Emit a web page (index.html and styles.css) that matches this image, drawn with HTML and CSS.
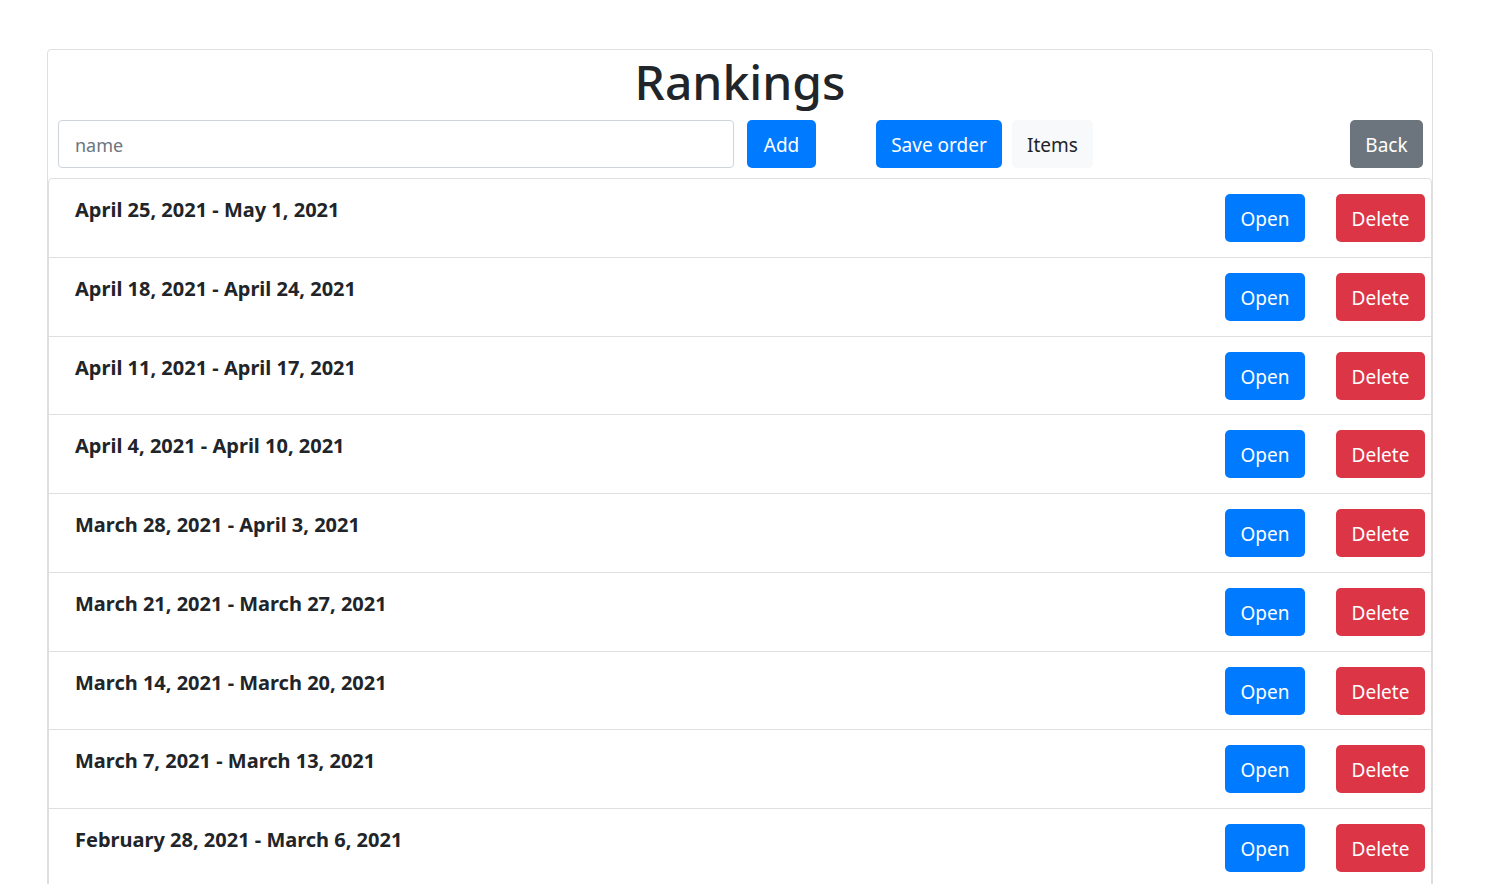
FILE: index.html
```html
<!DOCTYPE html>
<html lang="en">
<head>
<meta charset="utf-8">
<title>Rankings</title>
<link rel="stylesheet" href="styles.css">
</head>
<body>
<div class="card">
  <h1 class="title">Rankings</h1>
  <div class="toolbar">
    <input class="name-input" type="text" placeholder="name">
    <button class="btn btn-primary btn-add">Add</button>
    <button class="btn btn-primary btn-save">Save order</button>
    <button class="btn btn-light btn-items">Items</button>
    <span class="spacer"></span>
    <button class="btn btn-secondary btn-back">Back</button>
  </div>
  <ul class="list">
    <li class="item"><span class="range">April 25, 2021 - May 1, 2021</span><div class="actions"><button class="btn btn-primary btn-open">Open</button><button class="btn btn-danger btn-delete">Delete</button></div></li>
    <li class="item"><span class="range">April 18, 2021 - April 24, 2021</span><div class="actions"><button class="btn btn-primary btn-open">Open</button><button class="btn btn-danger btn-delete">Delete</button></div></li>
    <li class="item"><span class="range">April 11, 2021 - April 17, 2021</span><div class="actions"><button class="btn btn-primary btn-open">Open</button><button class="btn btn-danger btn-delete">Delete</button></div></li>
    <li class="item"><span class="range">April 4, 2021 - April 10, 2021</span><div class="actions"><button class="btn btn-primary btn-open">Open</button><button class="btn btn-danger btn-delete">Delete</button></div></li>
    <li class="item"><span class="range">March 28, 2021 - April 3, 2021</span><div class="actions"><button class="btn btn-primary btn-open">Open</button><button class="btn btn-danger btn-delete">Delete</button></div></li>
    <li class="item"><span class="range">March 21, 2021 - March 27, 2021</span><div class="actions"><button class="btn btn-primary btn-open">Open</button><button class="btn btn-danger btn-delete">Delete</button></div></li>
    <li class="item"><span class="range">March 14, 2021 - March 20, 2021</span><div class="actions"><button class="btn btn-primary btn-open">Open</button><button class="btn btn-danger btn-delete">Delete</button></div></li>
    <li class="item"><span class="range">March 7, 2021 - March 13, 2021</span><div class="actions"><button class="btn btn-primary btn-open">Open</button><button class="btn btn-danger btn-delete">Delete</button></div></li>
    <li class="item"><span class="range">February 28, 2021 - March 6, 2021</span><div class="actions"><button class="btn btn-primary btn-open">Open</button><button class="btn btn-danger btn-delete">Delete</button></div></li>
  </ul>
</div>
</body>
</html>
```

FILE: styles.css
```css
html, body {
  margin: 0;
  padding: 0;
  background: #fff;
}
body {
  font-family: "Noto Sans", "Open Sans", sans-serif;
  color: #212529;
  font-size: 16px;
}
.card {
  margin: 49px 0 0 47px;
  width: 1386px;
  box-sizing: border-box;
  border: 1px solid #dfdfdf;
  border-radius: 4px;
  background: #fff;
}
.title {
  margin: 0;
  height: 70px;
  font-size: 48px;
  font-weight: 500;
  line-height: 64px;
  text-align: center;
  color: #212529;
}
.toolbar {
  display: flex;
  align-items: center;
  padding: 0 9px 0 10px;
  height: 48px;
}
.name-input {
  box-sizing: border-box;
  width: 676px;
  height: 48px;
  border: 1px solid #ced4da;
  border-radius: 4px;
  padding: 2px 16px 0;
  font-family: inherit;
  font-size: 18px;
  color: #495057;
}
.name-input::placeholder {
  color: #6c757d;
}
.spacer {
  flex: 1;
}
.btn {
  box-sizing: border-box;
  height: 48px;
  border: 1px solid transparent;
  border-radius: 5px;
  padding: 2px 0 0;
  font-family: inherit;
  font-size: 19px;
  text-align: center;
  cursor: pointer;
}
.btn-primary { background: #007bff; color: #fff; }
.btn-danger { background: #dc3545; color: #fff; }
.btn-secondary { background: #6c757d; color: #fff; }
.btn-light { background: #f8f9fa; color: #212529; }
.btn-add { width: 69px; margin-left: 13px; }
.btn-save { width: 126px; margin-left: 60px; }
.btn-items { width: 81px; margin-left: 10px; }
.btn-back { width: 73px; }
.list {
  list-style: none;
  margin: 10px 0 0 0;
  padding: 0;
  border: 1px solid #dfdfdf;
  border-radius: 4px;
}
.item {
  display: flex;
  justify-content: space-between;
  align-items: flex-start;
  padding: 14.875px 6px 14.875px 26px;
  border-top: 1px solid #dfdfdf;
}
.item:first-child {
  border-top: none;
  padding-top: 15px;
}
.range {
  font-size: 20px;
  font-weight: 700;
  line-height: 32px;
}
.actions {
  display: flex;
  gap: 31px;
}
.btn-open { width: 80px; }
.btn-delete { width: 89px; }
```
